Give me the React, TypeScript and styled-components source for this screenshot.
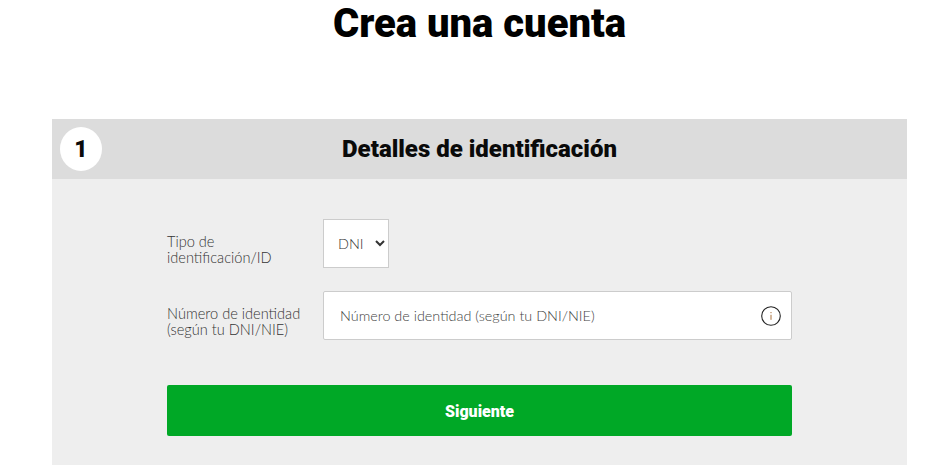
import React from "react";
import styled, { createGlobalStyle } from "styled-components";

const GlobalStyle = createGlobalStyle`
  html, body {
    margin: 0;
    padding: 0;
    height: 465px;
    overflow: hidden;
    background: #fff;
  }
`;

const Page = styled.div`
  width: 942px;
  height: 465px;
  overflow: hidden;
  padding: 0 35px 0 52px;
  box-sizing: border-box;
`;

const Title = styled.h1`
  margin: 0;
  height: 119px;
  padding-top: 2px;
  box-sizing: border-box;
  font: 900 40px/44px Roboto, sans-serif;
  color: #000;
  text-align: center;
`;

const Header = styled.div`
  position: relative;
  height: 60px;
  display: flex;
  align-items: center;
  justify-content: center;
  background: #dcdcdc;
`;

const StepBadge = styled.span`
  position: absolute;
  left: 8px;
  top: 8px;
  width: 42px;
  height: 44px;
  border-radius: 50%;
  background: #fff;
  display: flex;
  align-items: center;
  justify-content: center;
  font: 900 23px Roboto, sans-serif;
  color: #0a0a0a;
`;

const HeaderTitle = styled.h2`
  margin: 0;
  font: 900 24px Roboto, sans-serif;
  color: #0a0a0a;
`;

const Body = styled.div`
  background: #eeeeee;
  height: 286px;
  padding: 40px 115px 0;
  box-sizing: border-box;
`;

const Row = styled.div<{ $mb: number }>`
  display: flex;
  align-items: center;
  margin-bottom: ${(p) => p.$mb}px;
`;

const Label = styled.label`
  width: 156px;
  padding-top: 13px;
  font: 300 14.6px/16px Lato, sans-serif;
  color: #333;
`;

const SelectBox = styled.select`
  width: 66px;
  height: 49px;
  padding: 0 0 0 10px;
  background: #fff;
  border: 1px solid #cccccc;
  border-radius: 0;
  box-sizing: border-box;
  font: 300 14.4px Lato, sans-serif;
  color: #333;
`;

const InputWrap = styled.div`
  position: relative;
  flex: 1;
`;

const TextInput = styled.input`
  display: block;
  width: 100%;
  height: 49px;
  padding: 0 44px 0 16px;
  background: #fff;
  border: 1px solid #cccccc;
  border-radius: 2px;
  box-sizing: border-box;
  font: 300 14.4px Lato, sans-serif;
  color: #333;
  &::placeholder {
    color: #444;
    opacity: 1;
  }
`;

const InfoIcon = styled.svg`
  position: absolute;
  right: 11px;
  top: 15px;
  width: 20px;
  height: 20px;
`;

const SubmitButton = styled.button`
  display: block;
  width: 100%;
  height: 51px;
  padding: 1px 0 0;
  border: 0;
  border-radius: 2px;
  background: #00a826;
  color: #fff;
  font: 900 16px Roboto, sans-serif;
`;

export default function App() {
  return (
    <Page>
      <GlobalStyle />
      <Title>Crea una cuenta</Title>
      <Header>
        <StepBadge>1</StepBadge>
        <HeaderTitle>Detalles de identificación</HeaderTitle>
      </Header>
      <Body>
        <Row $mb={23}>
          <Label>
            Tipo de
            <br />
            identificación/ID
          </Label>
          <SelectBox defaultValue="DNI">
            <option>DNI</option>
          </SelectBox>
        </Row>
        <Row $mb={45}>
          <Label>
            Número de identidad
            <br />
            (según tu DNI/NIE)
          </Label>
          <InputWrap>
            <TextInput placeholder="Número de identidad (según tu DNI/NIE)" />
            <InfoIcon viewBox="0 0 20 20">
              <circle cx="10" cy="10" r="9.3" fill="none" stroke="#222" strokeWidth="1.1" />
              <path d="M10 8.8v5M10 6v1.2" fill="none" stroke="#a8703c" strokeWidth="1" />
            </InfoIcon>
          </InputWrap>
        </Row>
        <SubmitButton>Siguiente</SubmitButton>
      </Body>
    </Page>
  );
}
